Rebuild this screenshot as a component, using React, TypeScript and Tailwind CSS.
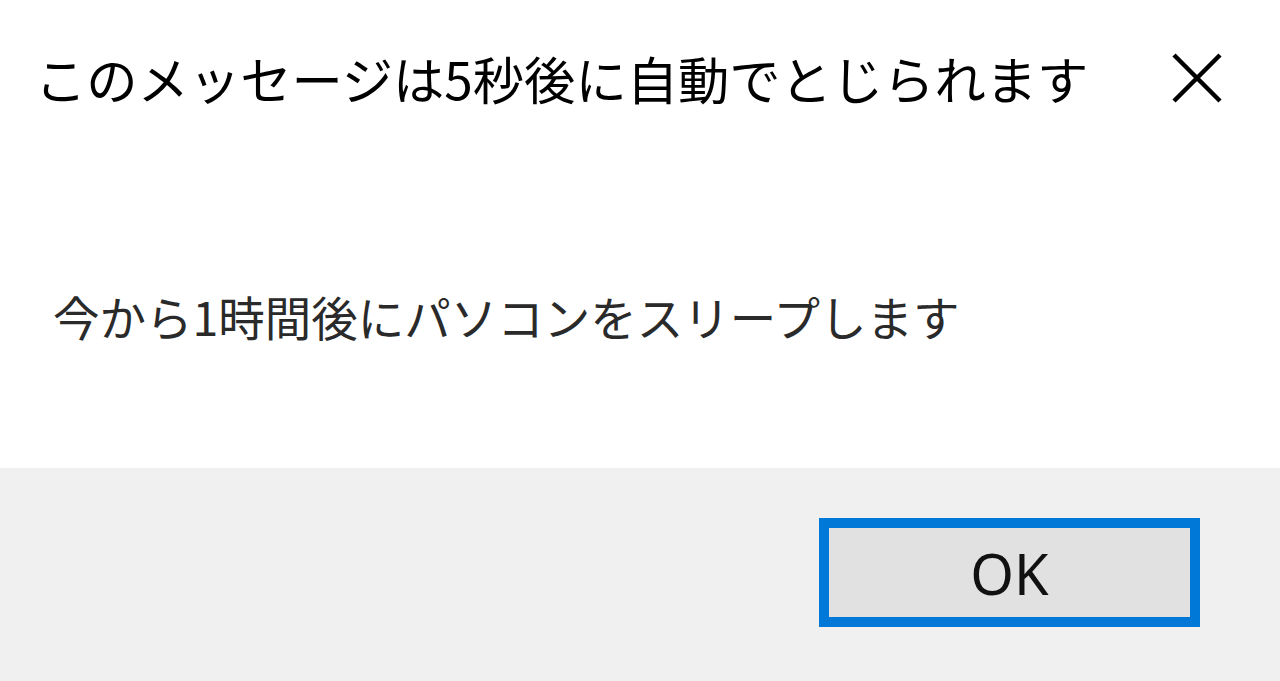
import React from "react";

export default function App() {
  const jp = { fontFamily: '"Noto Sans CJK JP", "Noto Sans", sans-serif' };
  return (
    <div className="w-[1280px] h-[681px] flex flex-col bg-white overflow-hidden" style={jp}>
      <div className="h-[468px] flex flex-col bg-white">
        <div className="h-[156px] flex items-center justify-between pl-[35px] pr-[58px]">
          <span className="text-[51.3px] leading-none text-black whitespace-nowrap">
            このメッセージは5秒後に自動でとじられます
          </span>
          <svg width="50" height="50" viewBox="0 0 50 50" className="shrink-0">
            <path d="M2 2 L48 48 M48 2 L2 48" stroke="#000" strokeWidth="4.5" fill="none" />
          </svg>
        </div>
        <div className="flex-1 flex items-center pt-[8px] pl-[53px]">
          <span className="text-[46.5px] leading-none text-[#2a2a2a] whitespace-nowrap">
            今から1時間後にパソコンをスリープします
          </span>
        </div>
      </div>
      <div className="flex-1 bg-[#f0f0f0] flex justify-end items-start pt-[50px] pr-[80px]">
        <div className="w-[381px] h-[109px] border-[10px] border-[#0078d7] bg-[#e1e1e1] flex items-center justify-center">
          <span className="text-[56px] leading-none text-[#111]" style={{ fontFamily: '"Noto Sans", sans-serif' }}>
            OK
          </span>
        </div>
      </div>
    </div>
  );
}
